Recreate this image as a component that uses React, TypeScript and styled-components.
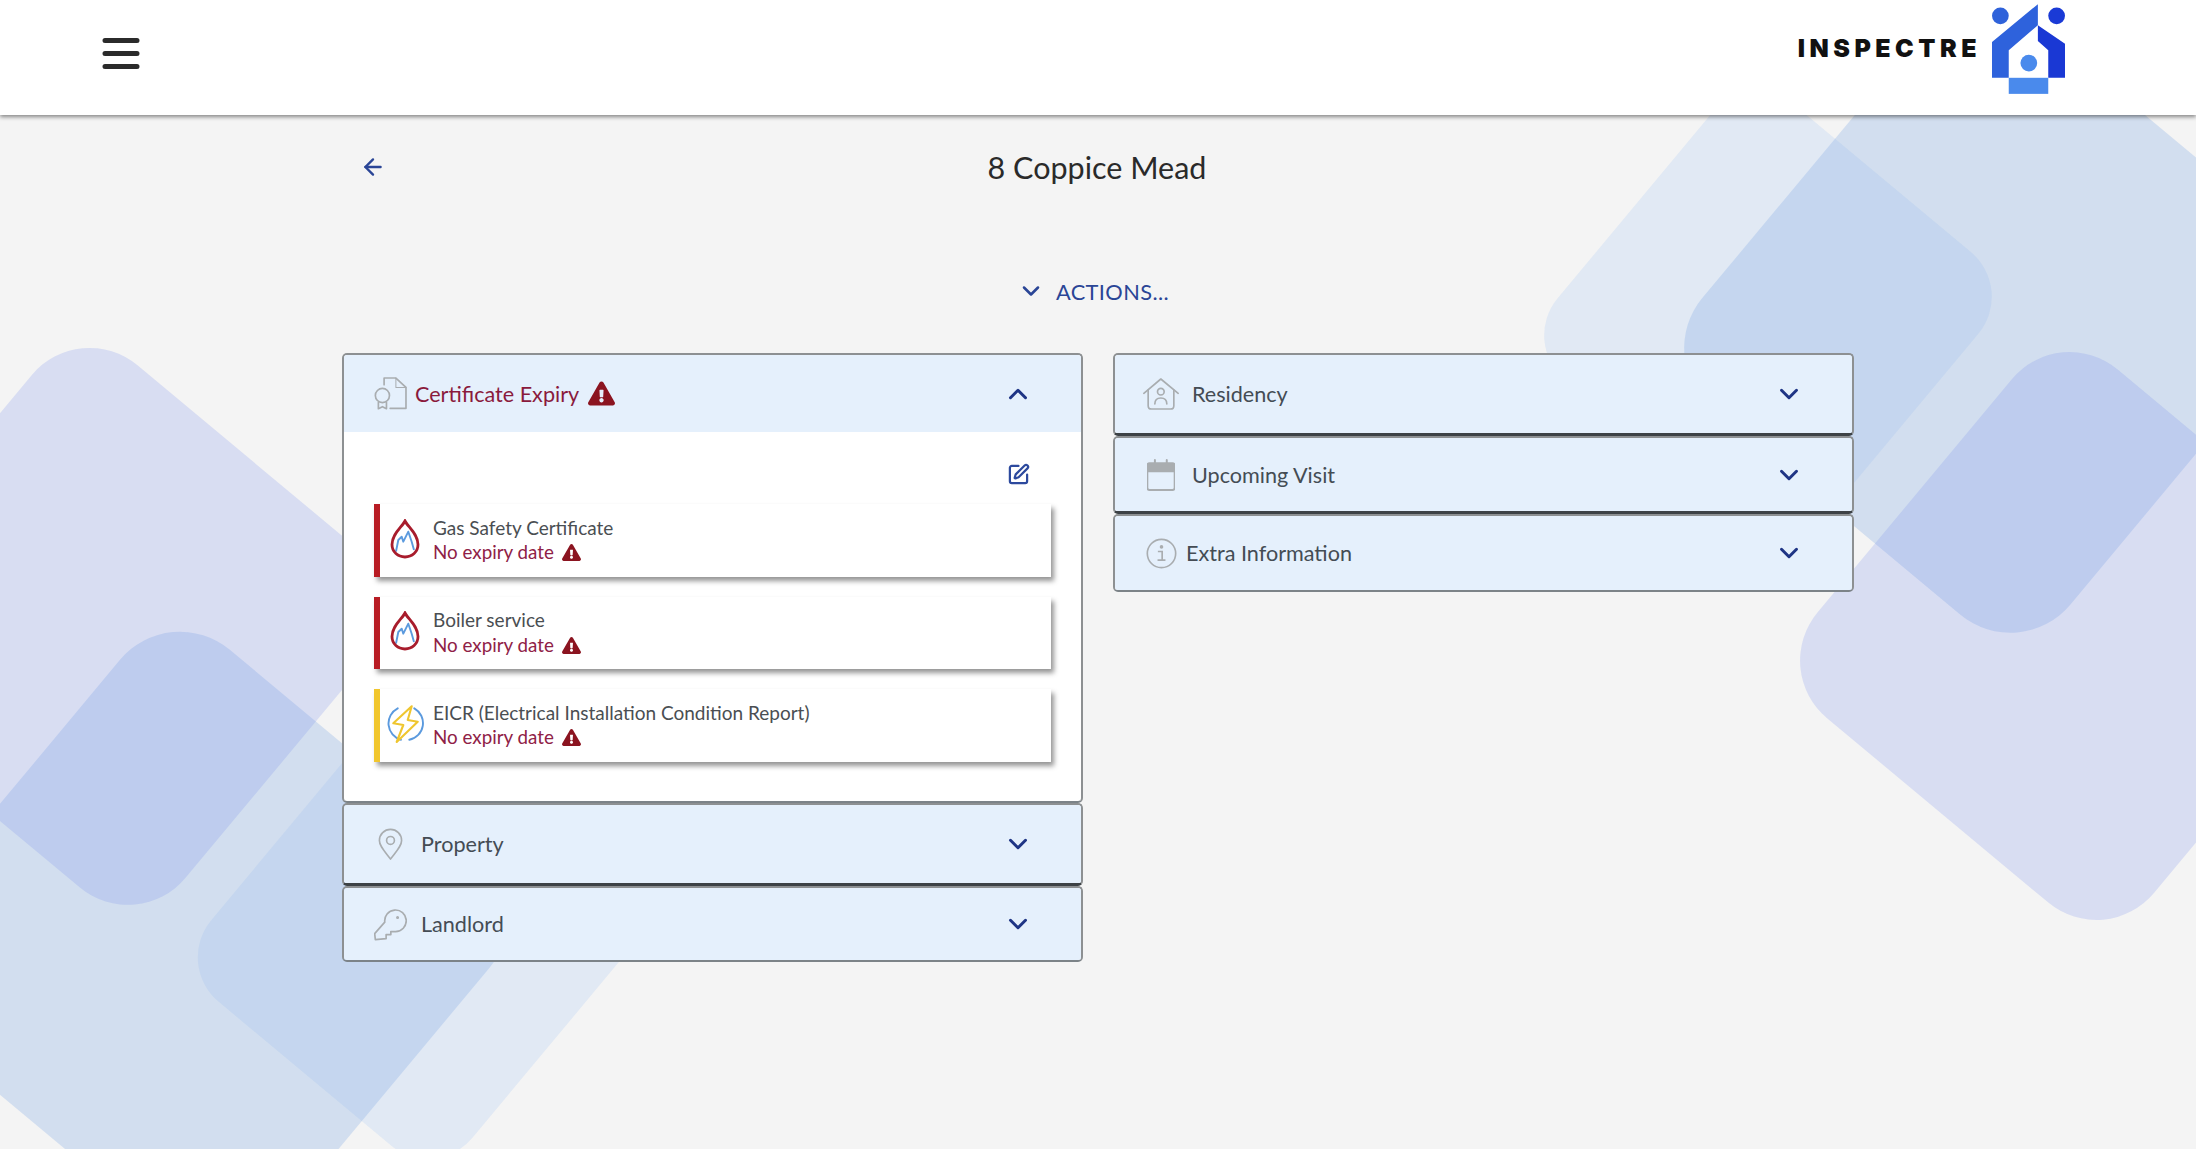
import React from "react";
import styled, { createGlobalStyle } from "styled-components";
import { ArrowLeft, ChevronDown, ChevronUp, SquarePen } from "lucide-react";
import { FaExclamationTriangle } from "react-icons/fa";

const Global = createGlobalStyle`
  html, body { margin: 0; padding: 0; background: #f4f4f4; }
  body { font-family: Lato, "Open Sans", sans-serif; }
  * { box-sizing: border-box; }
`;

const Page = styled.div`
  position: relative;
  width: 100%;
  height: 1149px;
  overflow: hidden;
  background: #f4f4f4;
`;

const Backdrop = styled.svg`
  position: absolute;
  inset: 0;
  width: 100%;
  height: 100%;
`;

const Header = styled.header`
  position: relative;
  z-index: 2;
  height: 115px;
  background: #fff;
  box-shadow: 0 2px 4px rgba(0, 0, 0, 0.45);
  display: flex;
  justify-content: space-between;
  align-items: flex-start;
  padding: 0 131px 0 102px;
`;

const Burger = styled.svg`
  margin-top: 36px;
  width: 38px;
  height: 36px;
`;

const Logo = styled.div`
  display: flex;
  align-items: center;
  gap: 11px;
  margin-top: 4px;
`;

const LogoText = styled.span`
  font-family: Inter, sans-serif;
  font-weight: 900;
  font-size: 25px;
  letter-spacing: 4.5px;
  line-height: 1;
  color: #111;
  margin-top: -2px;
`;

const Main = styled.main`
  position: relative;
  z-index: 1;
  width: 1512px;
  margin: 0 auto;
`;

const TitleBar = styled.div`
  display: grid;
  grid-template-columns: 1fr auto 1fr;
  align-items: center;
  height: 44px;
  margin-top: 30px;
`;

const Back = styled.span`
  display: flex;
  padding-left: 18px;
  color: #2a4596;
`;

const Title = styled.h1`
  margin: 0 0 0 -2px;
  font-size: 30.5px;
  font-weight: 400;
  color: #2a2a2a;
  line-height: 44px;
`;

const Actions = styled.div`
  display: flex;
  justify-content: center;
  align-items: center;
  gap: 11px;
  height: 30px;
  margin-top: 87px;
  padding-right: 10px;
  color: #2a4596;
  font-size: 21.8px;
  letter-spacing: 0.4px;
`;

const Columns = styled.div`
  display: grid;
  grid-template-columns: 741px 741px;
  gap: 30px;
  align-items: start;
  margin-top: 47px;
`;

const Stack = styled.div`
  display: flex;
  flex-direction: column;
`;

const Item = styled.section<{ $thin?: boolean }>`
  border: 2px solid #8d9092;
  border-bottom: ${(p) => (p.$thin ? "2px solid #7c8388" : "3px solid #3d4246")};
  border-radius: 5px;
  background: #fff;
  overflow: hidden;
`;

const Bar = styled.div<{ $h: number }>`
  height: ${(p) => p.$h}px;
  background: #e5f0fc;
  display: flex;
  align-items: center;
  padding: 0 48px 0 28px;
`;

const IconSlot = styled.span`
  width: 36px;
  flex: none;
  display: flex;
  justify-content: center;
  align-items: center;
  color: #a9adb0;
`;

const Label = styled.span<{ $gap: number; $alert?: boolean }>`
  margin-left: ${(p) => p.$gap}px;
  font-size: 21.6px;
  color: ${(p) => (p.$alert ? "#8a1a3c" : "#444c54")};
`;

const BigWarn = styled(FaExclamationTriangle)`
  margin-left: 9px;
  color: #8b1420;
  font-size: 27px;
`;

const Toggle = styled.span`
  margin-left: auto;
  display: flex;
  color: #1f3585;
`;

const Body = styled.div`
  padding: 31px 30px 0;
  height: 369px;
  display: flex;
  flex-direction: column;
`;

const EditRow = styled.div`
  display: flex;
  justify-content: flex-end;
  height: 22px;
  margin-bottom: 19px;
  padding-right: 21px;
  color: #2d4a9e;
`;

const Certs = styled.div`
  display: flex;
  flex-direction: column;
  gap: 20px;
`;

const Cert = styled.article<{ $accent: string }>`
  height: 72.5px;
  border-left: 6px solid ${(p) => p.$accent};
  background: #fff;
  box-shadow: 3px 4px 5px rgba(0, 0, 0, 0.42);
  display: flex;
  align-items: center;
`;

const CertIcon = styled.span`
  width: 49px;
  margin: -3px 4px 0 0;
  flex: none;
  display: flex;
  justify-content: center;
`;

const CertText = styled.div`
  display: flex;
  flex-direction: column;
  font-size: 19px;
  line-height: 24.5px;
`;

const CertName = styled.span`
  color: #4a4e52;
`;

const CertStatus = styled.span`
  display: flex;
  align-items: center;
  gap: 8px;
  font-size: 18.8px;
  color: #8f2146;
`;

const SmallWarn = styled(FaExclamationTriangle)`
  color: #8b1420;
  font-size: 19px;
`;

const G = { fill: "none", stroke: "currentColor", strokeWidth: 5, strokeLinecap: "round", strokeLinejoin: "round" } as const;

const CertificateIcon = () => (
  <svg width="33" height="33" viewBox="100 95 98 98">
    <g {...G}>
      <path d="M130 118V98h35l30 28v62h-47" />
      <path d="M165 98v28h30" strokeWidth="3" />
      <circle cx="125" cy="150" r="21" />
      <path d="M113 170v19l12-6 12 6v-19" />
    </g>
  </svg>
);
const PinIcon = () => (
  <svg width="25" height="32" viewBox="112 110 74 98">
    <g {...G}>
      <path d="M149 205C130 180 115 165 115 148a34 34 0 0 1 68 0C183 165 168 180 149 205Z" />
      <circle cx="149" cy="148" r="12" />
    </g>
  </svg>
);
const KeyIcon = () => (
  <svg width="33" height="33" viewBox="100 350 98 98">
    <g {...G}>
      <path d="M132 392a32 32 0 1 1 32 28h-14v9h-14v12l-32 3-2-18Z" />
      <circle cx="170" cy="378" r="2" />
    </g>
  </svg>
);
const HouseIcon = () => (
  <svg width="36" height="32" viewBox="130 112 107 96">
    <g {...G}>
      <path d="M132 158l51-43 52 43" />
      <path d="M145 148v47q0 10 10 10h57q10 0 10-10v-47" />
      <circle cx="183" cy="153" r="10" />
      <path d="M165 190q0-18 18-18t18 18" />
    </g>
  </svg>
);
const CalendarIcon = () => (
  <svg width="28" height="32" viewBox="141 353 85 95">
    <path d="M165 355v14M201 355v14" fill="none" stroke="currentColor" strokeWidth="6" strokeLinecap="round" />
    <path d="M149 365h69a7 7 0 0 1 7 7v67a7 7 0 0 1-7 7h-69a7 7 0 0 1-7-7v-67a7 7 0 0 1 7-7Z" fill="none" stroke="currentColor" strokeWidth="6" />
    <path d="M149 365h69a7 7 0 0 1 7 7v20h-83v-20a7 7 0 0 1 7-7Z" fill="currentColor" />
  </svg>
);
const InfoIcon = () => (
  <svg width="31" height="31" viewBox="136 591 94 94">
    <circle cx="183" cy="638" r="43" fill="none" stroke="currentColor" strokeWidth="5" />
    <circle cx="183" cy="618" r="5.5" fill="currentColor" />
    <path d="M172 632h13v26M171 658h24" fill="none" stroke="currentColor" strokeWidth="5" />
  </svg>
);
const FlameIcon = () => (
  <svg width="30" height="40" viewBox="0 0 30 40">
    <path d="M6 32.5 8.3 21 11.7 17.7 13.3 22.7 18.3 12.7 21.7 22.7 24 31" fill="none" stroke="#5b9ade" strokeWidth="1.9" strokeLinejoin="round" />
    <path d="M15 2C12 8 2 15 2 25.5 2 33 8 38 15 38S28 33 28 25.5C28 15 18 8 15 2Z" fill="none" stroke="#a81c2c" strokeWidth="2.8" />
  </svg>
);
const BoltIcon = () => (
  <svg width="38" height="38" viewBox="0 0 38 38">
    <path d="M11.7 3.3A17 17 0 0 0 15 34.8M28.3 3.3A17 17 0 0 1 23.3 34.8" fill="none" stroke="#5b9ade" strokeWidth="1.9" strokeLinecap="round" />
    <path d="M25.7 1.2 7.3 18.3 17.3 20 10.7 37 31.7 16.7 21.7 15Z" fill="none" stroke="#efc62f" strokeWidth="2.1" strokeLinejoin="round" />
  </svg>
);

const Chevron = ({ up }: { up?: boolean }) => (
  <Toggle>{up ? <ChevronUp size={30} strokeWidth={2.4} /> : <ChevronDown size={30} strokeWidth={2.4} />}</Toggle>
);

const certs = [
  { name: "Gas Safety Certificate", accent: "#b81c24", icon: <FlameIcon /> },
  { name: "Boiler service", accent: "#b81c24", icon: <FlameIcon /> },
  { name: "EICR (Electrical Installation Condition Report)", accent: "#f1c62d", icon: <BoltIcon /> },
];

const shapes = [
  { cx: 1768, cy: 316, w: 346, h: 358, r: 58, fill: "rgba(149,189,245,0.2)" },
  { cx: 1997, cy: 318.5, w: 479, h: 502, r: 78, fill: "rgba(134,171,227,0.3)" },
  { cx: 2083, cy: 636, w: 438, h: 454, r: 75, fill: "rgba(119,139,239,0.22)" },
  { cx: 419.3, cy: 936, w: 340, h: 358, r: 58, fill: "rgba(149,189,245,0.2)" },
  { cx: 198.2, cy: 941.7, w: 481, h: 489, r: 78, fill: "rgba(134,171,227,0.3)" },
  { cx: 108.7, cy: 626.4, w: 440, h: 438, r: 75, fill: "rgba(119,139,239,0.22)" },
];

export default function App() {
  return (
    <Page>
      <Global />
      <Backdrop viewBox="0 0 2196 1149">
        {shapes.map((s, i) => (
          <rect
            key={i}
            x={s.cx - s.w / 2}
            y={s.cy - s.h / 2}
            width={s.w}
            height={s.h}
            rx={s.r}
            fill={s.fill}
            transform={`rotate(39.8 ${s.cx} ${s.cy})`}
          />
        ))}
      </Backdrop>
      <Header>
        <Burger viewBox="0 0 38 36">
          <path d="M3 4.5h32M3 17.5h32M3 30.5h32" stroke="#2b2b2b" strokeWidth="5" strokeLinecap="round" />
        </Burger>
        <Logo>
          <LogoText>INSPECTRE</LogoText>
          <svg width="73" height="90" viewBox="725 12 218 268">
            <circle cx="750" cy="47" r="25" fill="#2f62da" />
            <circle cx="918" cy="47" r="25" fill="#1a3ad6" />
            <path d="M725 125 862 12v63l-87 75v82h-50Z" fill="#2e62dc" />
            <path d="M862 75l81 55v102h-50v-82l-31-28Z" fill="#1a38d4" />
            <rect x="775" y="232" width="118" height="48" fill="#4a8aec" />
            <circle cx="835" cy="188" r="25" fill="#4a8aec" />
          </svg>
        </Logo>
      </Header>
      <Main>
        <TitleBar>
          <Back>
            <ArrowLeft size={26} strokeWidth={2.2} />
          </Back>
          <Title>8 Coppice Mead</Title>
        </TitleBar>
        <Actions>
          <ChevronDown size={28} strokeWidth={2.2} />
          <span>ACTIONS...</span>
        </Actions>
        <Columns>
          <Stack>
            <Item $thin>
              <Bar $h={77}>
                <IconSlot>
                  <CertificateIcon />
                </IconSlot>
                <Label $gap={7} $alert>
                  Certificate Expiry
                </Label>
                <BigWarn />
                <Chevron up />
              </Bar>
              <Body>
                <EditRow>
                  <SquarePen size={23} strokeWidth={2.3} />
                </EditRow>
                <Certs>
                  {certs.map((c) => (
                    <Cert key={c.name} $accent={c.accent}>
                      <CertIcon>{c.icon}</CertIcon>
                      <CertText>
                        <CertName>{c.name}</CertName>
                        <CertStatus>
                          No expiry date <SmallWarn />
                        </CertStatus>
                      </CertText>
                    </Cert>
                  ))}
                </Certs>
              </Body>
            </Item>
            <Item>
              <Bar $h={78}>
                <IconSlot>
                  <PinIcon />
                </IconSlot>
                <Label $gap={13}>Property</Label>
                <Chevron />
              </Bar>
            </Item>
            <Item $thin>
              <Bar $h={72}>
                <IconSlot>
                  <KeyIcon />
                </IconSlot>
                <Label $gap={13}>Landlord</Label>
                <Chevron />
              </Bar>
            </Item>
          </Stack>
          <Stack>
            <Item>
              <Bar $h={78}>
                <IconSlot>
                  <HouseIcon />
                </IconSlot>
                <Label $gap={13}>Residency</Label>
                <Chevron />
              </Bar>
            </Item>
            <Item>
              <Bar $h={73}>
                <IconSlot>
                  <CalendarIcon />
                </IconSlot>
                <Label $gap={13}>Upcoming Visit</Label>
                <Chevron />
              </Bar>
            </Item>
            <Item $thin>
              <Bar $h={74}>
                <IconSlot>
                  <InfoIcon />
                </IconSlot>
                <Label $gap={7}>Extra Information</Label>
                <Chevron />
              </Bar>
            </Item>
          </Stack>
        </Columns>
      </Main>
    </Page>
  );
}
